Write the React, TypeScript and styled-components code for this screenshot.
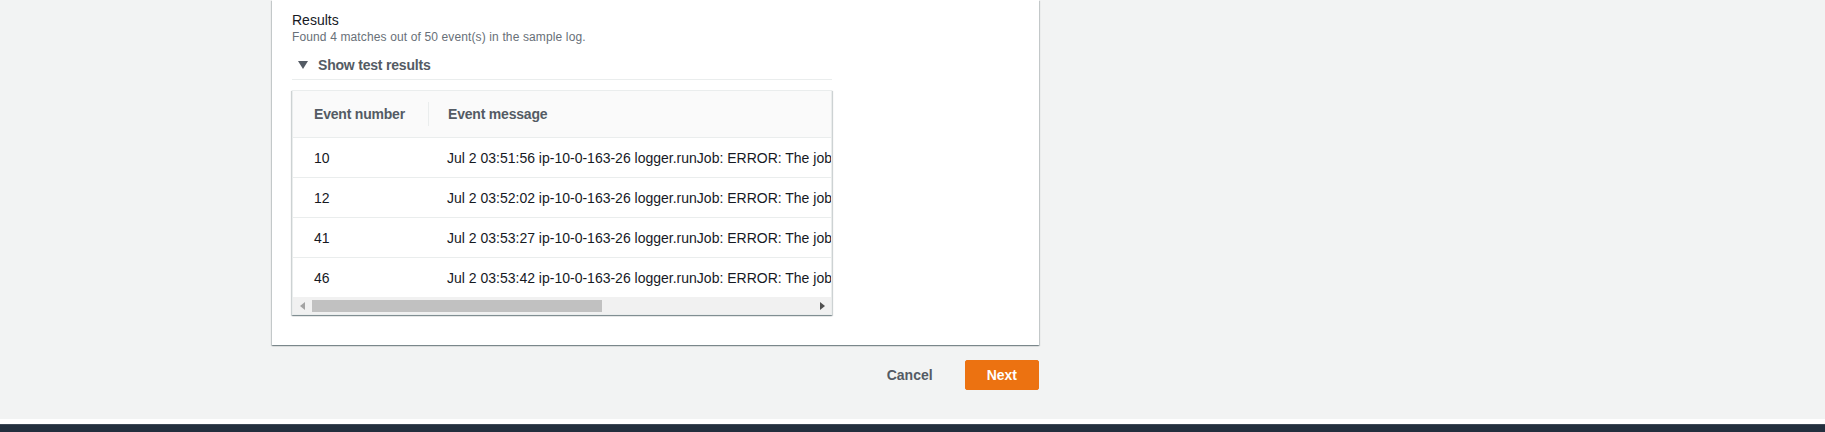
import React from 'react';
import styled, { createGlobalStyle } from 'styled-components';

const GlobalStyle = createGlobalStyle`
  html, body {
    margin: 0;
    padding: 0;
    background: #f2f3f3;
  }
  body {
    font-family: "Liberation Sans", Arial, sans-serif;
    color: #16191f;
    -webkit-font-smoothing: antialiased;
  }
`;

const Page = styled.div`
  display: flex;
  flex-direction: column;
  height: 432px;
  overflow: hidden;
`;

const Main = styled.main`
  display: flex;
  flex-direction: column;
  width: 767px;
  margin-left: 272px;
`;

const Card = styled.section`
  background: #fff;
  padding: 10px 20px 30px 20px;
  box-shadow: 0 1px 1px 0 rgba(0, 28, 36, 0.3), 1px 1px 1px 0 rgba(0, 28, 36, 0.15),
    -1px 1px 1px 0 rgba(0, 28, 36, 0.15);
`;

const Title = styled.div`
  font-size: 14px;
  line-height: 20px;
  color: #16191f;
`;

const Description = styled.div`
  font-size: 12px;
  line-height: 14px;
  letter-spacing: 0.13px;
  color: #687078;
`;

const Expandable = styled.div`
  width: 540px;
  margin-top: 7px;
`;

const ExpandHeader = styled.div`
  display: flex;
  align-items: center;
  gap: 10px;
  padding: 4px 0 4px 6px;
  border-bottom: 1px solid #eaeded;
  font-size: 14px;
  line-height: 20px;
  font-weight: 700;
  letter-spacing: -0.2px;
  color: #545b64;
`;

const TableBox = styled.div`
  margin-top: 10px;
  border: 1px solid #eaeded;
  box-shadow: 0 1px 1px 0 rgba(0, 28, 36, 0.3), 1px 1px 1px 0 rgba(0, 28, 36, 0.15),
    -1px 1px 1px 0 rgba(0, 28, 36, 0.15);
  background: #fff;
`;

const Viewport = styled.div`
  overflow: hidden;
`;

const Grid = styled.div`
  display: grid;
  grid-template-columns: 135px 820px;
  width: 955px;
`;

const HeadCell = styled.div<{ $first?: boolean }>`
  height: 46px;
  display: flex;
  align-items: center;
  background: #fafafa;
  border-bottom: 1px solid #eaeded;
  padding-left: ${(p) => (p.$first ? '21px' : '0')};
  font-size: 14px;
  font-weight: 700;
  letter-spacing: -0.2px;
  color: #545b64;
`;

const HeadLabel = styled.span<{ $divided?: boolean }>`
  display: block;
  line-height: 24px;
  padding-left: ${(p) => (p.$divided ? '19px' : '0')};
  border-left: ${(p) => (p.$divided ? '1px solid #eaeded' : 'none')};
`;

const Cell = styled.div<{ $first?: boolean; $last?: boolean }>`
  height: 39px;
  display: flex;
  align-items: center;
  white-space: nowrap;
  border-bottom: ${(p) => (p.$last ? 'none' : '1px solid #eaeded')};
  padding-left: ${(p) => (p.$first ? '21px' : '19px')};
  font-size: 14px;
  color: #16191f;
`;

const ScrollTrack = styled.div`
  height: 17px;
  background: #f1f1f1;
  display: flex;
  align-items: center;
  padding: 0 6px 0 7px;
  gap: 7px;
`;

const ScrollThumb = styled.div`
  height: 12px;
  background: #c1c1c1;
  flex: none;
`;

const Spacer = styled.div`
  flex: 1;
`;

const ButtonRow = styled.div`
  display: flex;
  justify-content: flex-end;
  align-items: center;
  gap: 12px;
  margin-top: 15px;
`;

const LinkButton = styled.button`
  height: 30px;
  padding: 0 20px;
  border: none;
  background: transparent;
  font-family: inherit;
  font-size: 14px;
  font-weight: 700;
  color: #545b64;
`;

const PrimaryButton = styled.button`
  height: 30px;
  padding: 0 21px;
  border: 1px solid #ec7211;
  border-radius: 2px;
  background: #ec7211;
  font-family: inherit;
  font-size: 14px;
  font-weight: 700;
  color: #fff;
`;

const Footer = styled.footer`
  margin-top: auto;
  border-top: 5px solid #fff;
`;

const FooterBar = styled.div`
  height: 7px;
  background: #232f3e;
  border-top: 1px solid #3d4856;
`;

const Caret = () => (
  <svg width="10" height="8" viewBox="0 0 10 8">
    <polygon points="0,0 10,0 5,8" fill="#545b64" />
  </svg>
);

const ArrowLeft = () => (
  <svg width="5" height="8" viewBox="0 0 5 8">
    <polygon points="5,0 5,8 0,4" fill="#a3a3a3" />
  </svg>
);

const ArrowRight = () => (
  <svg width="5" height="8" viewBox="0 0 5 8">
    <polygon points="0,0 0,8 5,4" fill="#505050" />
  </svg>
);

const rows = [
  { n: '10', t: '03:51:56' },
  { n: '12', t: '03:52:02' },
  { n: '41', t: '03:53:27' },
  { n: '46', t: '03:53:42' },
];

export default function App() {
  return (
    <>
      <GlobalStyle />
      <Page>
        <Main>
          <Card>
            <Title>Results</Title>
            <Description>Found 4 matches out of 50 event(s) in the sample log.</Description>
            <Expandable>
              <ExpandHeader>
                <Caret />
                <span>Show test results</span>
              </ExpandHeader>
              <TableBox>
                <Viewport>
                  <Grid>
                    <HeadCell $first>
                      <HeadLabel>Event number</HeadLabel>
                    </HeadCell>
                    <HeadCell>
                      <HeadLabel $divided>Event message</HeadLabel>
                    </HeadCell>
                    {rows.map((r, i) => (
                      <React.Fragment key={r.n}>
                        <Cell $first $last={i === rows.length - 1}>
                          {r.n}
                        </Cell>
                        <Cell $last={i === rows.length - 1}>
                          {`Jul 2 ${r.t} ip-10-0-163-26 logger.runJob: ERROR: The job failed to complete successfully`}
                        </Cell>
                      </React.Fragment>
                    ))}
                  </Grid>
                </Viewport>
                <ScrollTrack>
                  <ArrowLeft />
                  <ScrollThumb style={{ width: 290 }} />
                  <Spacer />
                  <ArrowRight />
                </ScrollTrack>
              </TableBox>
            </Expandable>
          </Card>
          <ButtonRow>
            <LinkButton>Cancel</LinkButton>
            <PrimaryButton>Next</PrimaryButton>
          </ButtonRow>
        </Main>
        <Footer>
          <FooterBar />
        </Footer>
      </Page>
    </>
  );
}
